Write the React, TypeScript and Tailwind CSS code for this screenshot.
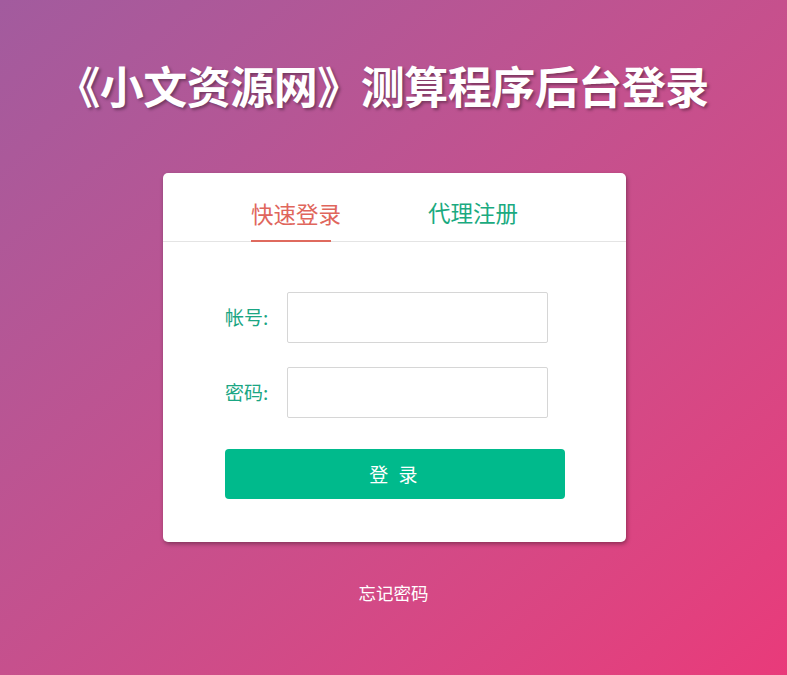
export default function App() {
  return (
    <div
      className="min-h-[675px] w-full bg-gradient-to-br from-[#a25b9e] to-[#e93a7a] flex flex-col items-center"
      style={{ fontFamily: '"Microsoft YaHei", "Noto Sans CJK SC", "Noto Sans", sans-serif' }}
    >
      {/* Title */}
      <h1 className="mt-[55px] mr-[22px] text-[44px] leading-[60px] font-bold text-white tracking-[-0.5px] [text-shadow:2px_2px_3px_rgba(0,0,0,0.35)]">
        《小文资源网》测算程序后台登录
      </h1>

      {/* Card */}
      <div className="mt-[58px] ml-[2px] w-[463px] h-[369px] bg-white rounded-[5px] shadow-[1px_2px_4px_rgba(0,0,0,0.35)] flex flex-col">
        <div className="flex h-[69px] border-b border-[#e4e4e4] pl-[88px]">
          <div className="flex flex-col justify-end">
            <span className="text-[22.5px] leading-[28px] text-[#e0665c] pb-[13px]">快速登录</span>
            <div className="h-[2px] w-[80px] bg-[#df6a5e] -mb-px" />
          </div>
          <div className="flex flex-col justify-end ml-[87px]">
            <span className="text-[22.5px] leading-[28px] text-[#1aaa80] pb-[15px]">代理注册</span>
          </div>
        </div>

        <div className="flex flex-col pl-[62px] pt-[50px]">
          <div className="flex items-center">
            <label className="w-[62px] text-[19px] text-[#1aa683]">帐号:</label>
            <input className="w-[261px] h-[51px] border border-[#d6d6d6] rounded-[2px] outline-none px-2" />
          </div>
          <div className="flex items-center mt-[24px]">
            <label className="w-[62px] text-[19px] text-[#1aa683]">密码:</label>
            <input type="password" className="w-[261px] h-[51px] border border-[#d6d6d6] rounded-[2px] outline-none px-2" />
          </div>
          <button className="mt-[31px] w-[340px] h-[50px] rounded-[4px] bg-[#00ba8c] text-white text-[19px] tracking-[3px]">
            登 录
          </button>
        </div>
      </div>

      <a className="mt-[38px] text-[17.5px] text-white">忘记密码</a>
    </div>
  );
}
